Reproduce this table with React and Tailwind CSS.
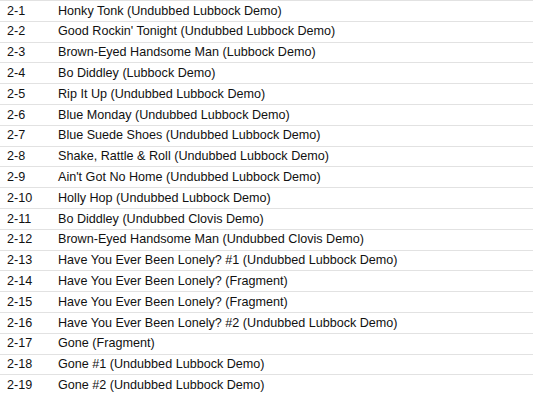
const tracks = [
  ["2-1", "Honky Tonk (Undubbed Lubbock Demo)"],
  ["2-2", "Good Rockin' Tonight (Undubbed Lubbock Demo)"],
  ["2-3", "Brown-Eyed Handsome Man (Lubbock Demo)"],
  ["2-4", "Bo Diddley (Lubbock Demo)"],
  ["2-5", "Rip It Up (Undubbed Lubbock Demo)"],
  ["2-6", "Blue Monday (Undubbed Lubbock Demo)"],
  ["2-7", "Blue Suede Shoes (Undubbed Lubbock Demo)"],
  ["2-8", "Shake, Rattle & Roll (Undubbed Lubbock Demo)"],
  ["2-9", "Ain't Got No Home (Undubbed Lubbock Demo)"],
  ["2-10", "Holly Hop (Undubbed Lubbock Demo)"],
  ["2-11", "Bo Diddley (Undubbed Clovis Demo)"],
  ["2-12", "Brown-Eyed Handsome Man (Undubbed Clovis Demo)"],
  ["2-13", "Have You Ever Been Lonely? #1 (Undubbed Lubbock Demo)"],
  ["2-14", "Have You Ever Been Lonely? (Fragment)"],
  ["2-15", "Have You Ever Been Lonely? (Fragment)"],
  ["2-16", "Have You Ever Been Lonely? #2 (Undubbed Lubbock Demo)"],
  ["2-17", "Gone (Fragment)"],
  ["2-18", "Gone #1 (Undubbed Lubbock Demo)"],
  ["2-19", "Gone #2 (Undubbed Lubbock Demo)"],
];

export default function App() {
  return (
    <div className="w-[533px] h-[402px] bg-white overflow-hidden font-['Liberation_Sans',Arial,sans-serif] text-[12.6px] text-[#111]">
      {tracks.map(([num, title]) => (
        <div
          key={num}
          className="flex items-center h-[20.8px] border-t border-[#e2e2e2] leading-none"
        >
          <span className="w-[58px] pl-[7px] shrink-0">{num}</span>
          <span className="whitespace-nowrap">{title}</span>
        </div>
      ))}
    </div>
  );
}
